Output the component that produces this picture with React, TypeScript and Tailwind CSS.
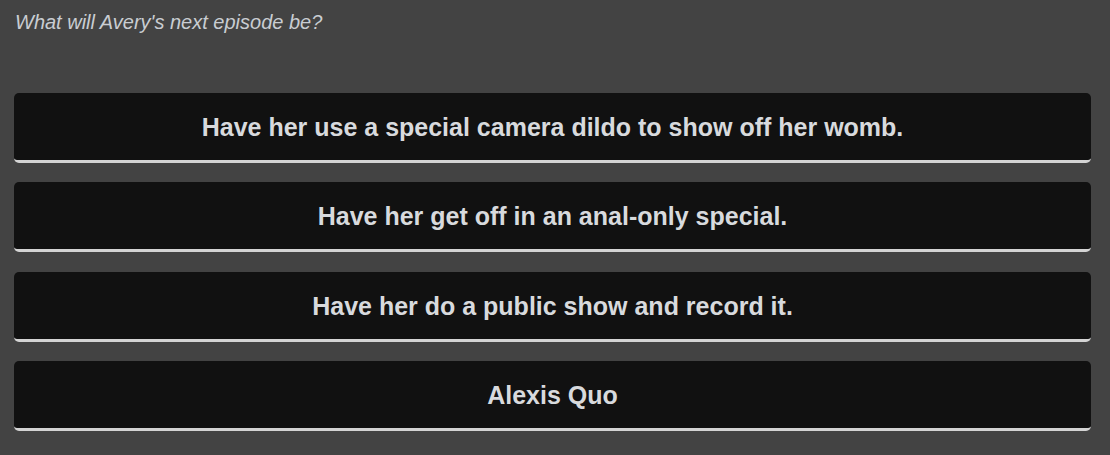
const choices = [
  "Have her use a special camera dildo to show off her womb.",
  "Have her get off in an anal-only special.",
  "Have her do a public show and record it.",
  "Alexis Quo",
];

export default function App() {
  return (
    <main className="min-h-[455px] bg-[#434343] pl-[14px] pr-[19px] pt-[10px] font-['Liberation_Sans',Arial,sans-serif]">
      <p className="pl-px text-[20px] italic leading-[24px] text-[#c9cdd2]">
        What will Avery's next episode be?
      </p>
      <div className="mt-[59px] flex flex-col gap-[19.4px]">
        {choices.map((choice) => (
          <button
            key={choice}
            className="flex h-[70px] w-full items-center justify-center rounded-[5px] border-b-[3px] border-[#d4d4d4] bg-[#111111] pt-[2px] text-[25px] font-bold text-[#d8dadd]"
          >
            {choice}
          </button>
        ))}
      </div>
    </main>
  );
}
